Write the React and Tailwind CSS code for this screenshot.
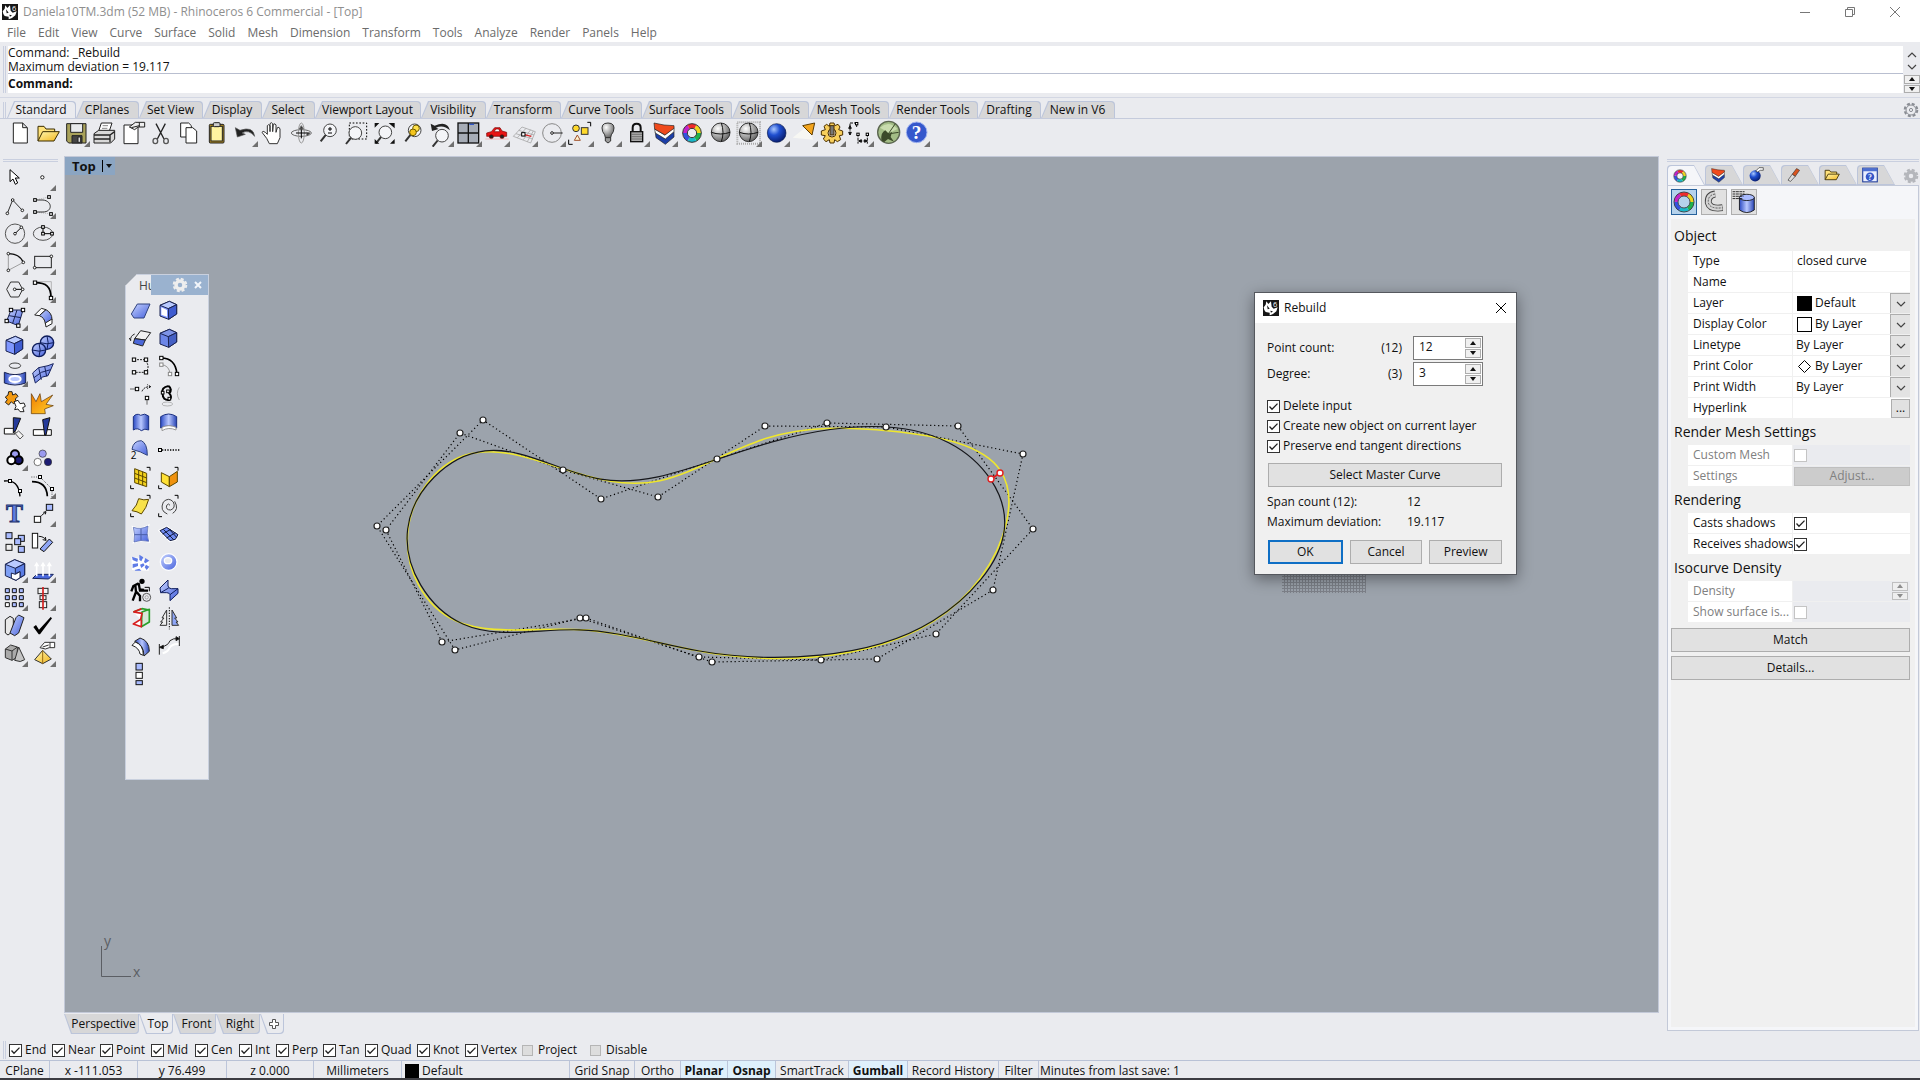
import React, { useState } from "react";

// ---------- small drawing helpers (84 unit grid, 3 units per pixel) ----------

const Sq = ({ x, y, s = 10, fill = "#fff", stroke = "#000" }) => (
  <rect x={x - s / 2} y={y - s / 2} width={s} height={s} fill={fill} stroke={stroke} strokeWidth="3" />
);

const Dot = ({ x, y, r = 4 }) => <circle cx={x} cy={y} r={r} fill="#fff" stroke="#000" strokeWidth="2.5" />;

const Cube = ({ top = "#b9caff", left = "#7f97ff", right = "#3f5cd0" }) => (
  <g stroke="#1a2350" strokeWidth="3" strokeLinejoin="round">
    <path d="M18 28L46 16L68 26L68 54L44 70L18 60Z" fill={left} />
    <path d="M18 28L46 16L68 26L43 38Z" fill={top} />
    <path d="M43 38L68 26V54L44 70Z" fill={right} />
  </g>
);

const Brackets = () => <path d="M62 10H72V20M14 64V74H24" fill="none" stroke="#000" strokeWidth="3" />;

const RING_COLORS = ["#1fb14b", "#18b8c9", "#3352e0", "#c321c9", "#ef2b2b", "#efd51c"];

const Ring = ({ r = 24 }) => (
  <g fill="none" strokeWidth="13">
    {RING_COLORS.map((color, i) => (
      <circle key={color} cx="42" cy="42" r={r} pathLength="60" strokeDasharray="10 50" strokeDashoffset={i * -10} stroke={color} />
    ))}
    <circle cx="42" cy="42" r={r + 7} stroke="#333" strokeWidth="3" />
    <circle cx="42" cy="42" r={r - 7} stroke="#333" strokeWidth="3" />
  </g>
);

const Sphere = ({ fill = "url(#gGray)" }) => (
  <g stroke="#333" strokeWidth="3" fill="none">
    <circle cx="44" cy="40" r="28" fill={fill} />
    <path d="M16 40Q44 50 72 40M46 12Q56 40 46 68" stroke="#111" />
  </g>
);

const Magnifier = ({ x = 46, y = 34, children }) => (
  <g fill="none" stroke="#333" strokeWidth="3">
    <path d={`M${x - 12} ${y + 13}L${x - 28} ${y + 33}`} strokeWidth="6" />
    <circle cx={x} cy={y} r="19" fill="#f4f5f8" stroke="#444" />
    {children}
  </g>
);

const Layers = () => (
  <g stroke="#222" strokeWidth="2" strokeLinejoin="round">
    <path d="M16 40L44 58L72 38V54L46 76L18 56Z" fill="#1d3fa8" />
    <path d="M14 30L44 48L72 26V38L46 60L16 42Z" fill="#fff" />
    <path d="M12 12L42 18L72 20L72 28L45 48L14 30Z" fill="#f04a1c" />
  </g>
);

const Gradients = () => (
  <svg className="absolute h-0 w-0" aria-hidden="true">
    <defs>
      <linearGradient id="gBlue" x1="0" y1="0" x2="1" y2="1">
        <stop offset="0" stopColor="#c6d3ff" />
        <stop offset="1" stopColor="#4661dc" />
      </linearGradient>
      <linearGradient id="gDeep" x1="0" y1="0" x2="1" y2="0">
        <stop offset="0" stopColor="#2c4bc4" />
        <stop offset=".5" stopColor="#b9c8ff" />
        <stop offset="1" stopColor="#2743b4" />
      </linearGradient>
      <linearGradient id="gYellow" x1="0" y1="0" x2="1" y2="1">
        <stop offset="0" stopColor="#fff7b0" />
        <stop offset="1" stopColor="#f3b61c" />
      </linearGradient>
      <linearGradient id="gOrange" x1="0" y1="0" x2="1" y2="1">
        <stop offset="0" stopColor="#f07d00" />
        <stop offset="1" stopColor="#ffd02b" />
      </linearGradient>
      <radialGradient id="gGray" cx=".35" cy=".3" r=".8">
        <stop offset="0" stopColor="#fff" />
        <stop offset="1" stopColor="#555" />
      </radialGradient>
      <radialGradient id="gBall" cx=".35" cy=".3" r=".8">
        <stop offset="0" stopColor="#a9c8ff" />
        <stop offset=".4" stopColor="#1f4fd0" />
        <stop offset="1" stopColor="#04145e" />
      </radialGradient>
      <pattern id="gMesh" width="3" height="3" patternUnits="userSpaceOnUse">
        <path d="M0 .5H3M.5 0V3" stroke="#7d8189" strokeWidth="1" />
      </pattern>
    </defs>
  </svg>
);

// ---------- icon tables: [name, drawing, has flyout] ----------

const STANDARD_TOOLS = [
  ["New", <path d="M22 12H50L64 26V72H22Z M50 12V26H64" fill="#fff" stroke="#222" strokeWidth="3" />],
  ["Open", (
    <g stroke="#3a2c00" strokeWidth="3" strokeLinejoin="round">
      <path d="M12 66V22H30L36 30H62V40" fill="#ffe27a" />
      <path d="M12 66L26 38H76L60 66Z" fill="url(#gYellow)" />
    </g>
  )],
  ["Save", (
    <g stroke="#222" strokeWidth="3">
      <path d="M14 14H72V72H20L14 66Z" fill="#a9a25a" />
      <path d="M26 14H62V40H26Z" fill="#e8eaec" />
      <path d="M30 50H60V72H30Z" fill="#444" />
      <path d="M48 54H56V70H48Z" fill="#ddd" />
    </g>
  ), true],
  ["Print", (
    <g stroke="#222" strokeWidth="3" strokeLinejoin="round">
      <path d="M26 36L34 12H66L58 36Z" fill="#fff" />
      <path d="M12 44L26 34H74V60L62 72H12Z" fill="#d8d8d8" />
      <path d="M12 48H60L74 38M12 60H60M60 48V70" fill="none" strokeWidth="4" />
      <path d="M38 20H54M36 28H52" fill="none" stroke="#888" />
    </g>
  )],
  ["Document properties", (
    <g stroke="#222" strokeWidth="3">
      <path d="M18 18H60V74H18Z" fill="#fff" />
      <path d="M34 24L52 10H80V24H60L50 32Z" fill="#eee" />
      <path d="M40 26L64 20M64 10V24" fill="none" />
    </g>
  )],
  ["Cut", (
    <g fill="none" stroke="#222" strokeWidth="4">
      <path d="M30 14L54 60M58 14L34 60" />
      <ellipse cx="28" cy="66" rx="7" ry="8" stroke="#555" />
      <ellipse cx="60" cy="66" rx="7" ry="8" stroke="#555" />
    </g>
  )],
  ["Copy", (
    <g fill="#fff" stroke="#222" strokeWidth="3">
      <path d="M20 12H44L52 20V54H20Z" />
      <path d="M36 26H56L68 36V72H36Z" />
    </g>
  )],
  ["Paste", (
    <g stroke="#222" strokeWidth="3">
      <rect x="22" y="16" width="44" height="56" rx="3" fill="#b08a1e" />
      <rect x="27" y="22" width="34" height="44" fill="#fff3a0" />
      <rect x="34" y="11" width="20" height="12" rx="3" fill="#ccc" />
    </g>
  )],
  ["Undo", <path d="M16 26L22 54L46 46L36 42Q56 30 74 52Q70 20 30 34Z" fill="#222" stroke="#555" strokeWidth="2" />, true],
  ["Pan", (
    <path
      d="M26 58L12 40Q14 34 22 40L28 46V20Q32 14 36 20V38V14Q40 8 44 14V38L46 16Q52 12 54 18V40L58 26Q64 22 66 30V56L58 74H34Z"
      fill="#fff" stroke="#333" strokeWidth="3" strokeLinejoin="round"
    />
  )],
  ["Rotate view", (
    <g fill="none" stroke="#666" strokeWidth="3">
      <ellipse cx="46" cy="42" rx="30" ry="10" />
      <ellipse cx="46" cy="42" rx="9" ry="30" stroke="#999" />
      <path d="M46 26V58M30 42H62" stroke="#000" />
      <path d="M46 20L52 30H40ZM64 50L72 42L60 40Z" fill="#333" />
    </g>
  )],
  ["Zoom", <Magnifier x={48}><path d="M48 24V36M42 30H54M42 42H54" stroke="#000" /></Magnifier>],
  ["Zoom window", (
    <g>
      <path d="M22 12H74V60H22Z" fill="none" stroke="#000" strokeWidth="3" strokeDasharray="5 5" />
      <Magnifier x={40} y={42} />
    </g>
  )],
  ["Zoom extents", (
    <g>
      <Magnifier x={46} y={40} />
      <path d="M14 12H28L14 26ZM56 12H74V28ZM14 60V74H28ZM74 60V74H60Z" fill="#111" />
    </g>
  )],
  ["Zoom selected", (
    <Magnifier x={50} y={34}>
      <circle cx="54" cy="28" r="10" fill="#ffe14a" stroke="#6d5a00" />
      <circle cx="45" cy="40" r="10" fill="#f5c51c" stroke="#6d5a00" />
    </Magnifier>
  )],
  ["Undo view change", (
    <g>
      <Magnifier x={48} y={50} />
      <path d="M14 14L18 36L38 30L30 26Q52 16 72 34Q64 4 26 20Z" fill="#222" />
    </g>
  ), true],
  ["Four viewports", (
    <g stroke="#111" strokeWidth="4">
      <rect x="12" y="12" width="62" height="60" fill="#a6acb6" />
      <path d="M43 12V72M12 42H74" />
      <path d="M46 16H60" stroke="#3157c8" />
    </g>
  ), true],
  ["Named views", (
    <g stroke="#7a0000" strokeWidth="2">
      <path d="M14 50V42L28 38L38 26H54L60 36L74 40V52H14Z" fill="#e81414" />
      <path d="M42 30H50L54 38H36Z" fill="#fff" />
      <circle cx="28" cy="53" r="6" fill="#222" />
      <circle cx="60" cy="53" r="6" fill="#222" />
      <path d="M10 60H80" stroke="#f2a3a3" />
    </g>
  ), true],
  ["Set CPlane", (
    <g fill="none" stroke="#999" strokeWidth="2">
      <path d="M10 52L36 24L76 38L62 72ZM18 44L68 60M26 34L72 48M22 56L48 28M40 62L62 32M52 68L70 36" />
      <path d="M40 46L64 52" stroke="#d22" strokeWidth="4" />
      <Sq x={40} y={46} />
    </g>
  ), true],
  ["Object snap", (
    <g fill="none" stroke="#888" strokeWidth="3">
      <circle cx="42" cy="42" r="28" />
      <path d="M42 42H74" stroke="#222" />
      <Dot x={42} y={42} />
    </g>
  ), true],
  ["Select objects", (
    <g stroke="#333" strokeWidth="3">
      <circle cx="30" cy="28" r="10" fill="#ffd92b" />
      <rect x="46" y="26" width="20" height="20" fill="#ffd92b" />
      <path d="M34 48L43 64H25Z" fill="#fff3d0" stroke="#a0522d" />
      <path d="M64 10H74V22M8 62V76H20" fill="none" stroke="#000" />
    </g>
  ), true],
  ["Hide", (
    <g stroke="#333" strokeWidth="3">
      <path d="M34 56Q34 48 26 38Q18 12 42 12Q66 12 58 38Q50 48 50 56Z" fill="url(#gGray)" />
      <path d="M34 56H50V66L42 72L34 66Z" fill="#999" />
    </g>
  ), true],
  ["Lock", (
    <g stroke="#111" strokeWidth="4">
      <path d="M32 40V26Q32 14 44 14Q56 14 56 26V40" fill="none" strokeWidth="6" />
      <rect x="26" y="38" width="36" height="30" fill="#aaa" />
      <path d="M28 46H60M28 53H60M28 60H60" stroke="#555" strokeWidth="2" />
    </g>
  ), true],
  ["Layers", <Layers />, true],
  ["Object properties", <Ring r={21} />, true],
  ["Shade", <Sphere />],
  ["Render preview", (
    <g>
      <path d="M10 10H78V74H10Z" fill="none" stroke="#aaa" strokeWidth="6" strokeDasharray="3 3" />
      <Sphere />
    </g>
  ), true],
  ["Render", <circle cx="44" cy="42" r="28" fill="url(#gBall)" stroke="#0a1c50" strokeWidth="2" />, true],
  ["Spotlight", (
    <g>
      <path d="M8 56L52 20L70 62Z" fill="#f7f7f3" />
      <path d="M38 20L74 12L66 48Z" fill="#f3a41c" stroke="#5c3c00" strokeWidth="3" />
    </g>
  ), true],
  ["Options", (
    <g stroke="#4a2f00" strokeWidth="3">
      <path d="M36 12H48L50 20L60 16L66 24L62 32L74 36V48L64 50L68 62L58 68L50 62L48 72H36L34 62L24 68L16 60L22 50L10 48V36L22 32L18 22L26 16L34 22Z" fill="#f8cf5c" />
      <circle cx="42" cy="42" r="12" fill="#eaebef" />
      <path d="M36 20H48V48H36Z" fill="#777" />
    </g>
  ), true],
  ["Dimension", (
    <g fill="none" stroke="#111" strokeWidth="3">
      <path d="M12 14V50M12 12H32V24M36 44V74M64 44V74M40 66H62" strokeDasharray="9 3" />
      <path d="M12 20L8 28H16ZM12 48L8 40H16ZM38 66L46 62V70ZM64 66L56 62V70Z" fill="#111" />
      <Sq x={32} y={14} s={7} />
      <Sq x={36} y={46} s={7} />
      <Sq x={64} y={46} s={7} />
    </g>
  ), true],
  ["Grasshopper", (
    <g>
      <circle cx="44" cy="40" r="33" fill="#a3bd86" stroke="#5b6650" strokeWidth="4" />
      <path d="M18 26Q44 2 70 30L46 42Z" fill="#c9dcae" />
      <path d="M22 64Q20 40 34 34L44 44L54 38L50 54L60 68L42 60L30 70Z" fill="#3c4a2a" />
      <path d="M42 46L64 14M48 44L74 40" stroke="#3c4a2a" strokeWidth="3" />
    </g>
  )],
  ["Help", (
    <g>
      <circle cx="44" cy="40" r="31" fill="#3558cc" stroke="#9fb2ef" strokeWidth="3" />
      <text x="44" y="60" textAnchor="middle" fontFamily="Liberation Serif, serif" fontWeight="bold" fontSize="58" fill="#fff">?</text>
    </g>
  ), true],
];

const SIDE_TOOLS = [
  ["Select", <path d="M30 20V56L39 48L46 64L53 60L46 45H58Z" fill="#fff" stroke="#000" strokeWidth="3" />],
  ["Point", <Dot x={43} y={43} r={5} />, true],
  ["Polyline", (
    <g>
      <path d="M22 67L38 27L67 58" fill="none" stroke="#333" strokeWidth="3" />
      <Dot x={22} y={67} /><Dot x={38} y={27} /><Dot x={67} y={58} />
    </g>
  ), true],
  ["Curve", (
    <g>
      <path d="M21 27L63 18M21 63L69 69" fill="none" stroke="#999" strokeWidth="2" strokeDasharray="3 3" />
      <path d="M21 27H45C74 30 74 63 45 63H21" fill="none" stroke="#333" strokeWidth="3" />
      <Sq x={21} y={27} s={8} /><Sq x={63} y={18} s={8} /><Sq x={21} y={63} s={8} /><Sq x={69} y={69} s={8} />
    </g>
  ), true],
  ["Circle", (
    <g>
      <circle cx="45" cy="44" r="29" fill="none" stroke="#555" strokeWidth="3" />
      <path d="M45 44L64 25" stroke="#000" strokeWidth="3" />
      <Dot x={45} y={44} /><Dot x={64} y={25} />
    </g>
  ), true],
  ["Ellipse", (
    <g>
      <ellipse cx="45" cy="44" rx="29" ry="20" fill="none" stroke="#555" strokeWidth="3" />
      <path d="M45 24V44H72" fill="none" stroke="#000" strokeWidth="3" />
      <Sq x={45} y={24} s={8} /><Sq x={45} y={44} s={8} /><Sq x={72} y={44} s={8} />
    </g>
  ), true],
  ["Arc", (
    <g>
      <path d="M70 46L25 70V20" fill="none" stroke="#777" strokeWidth="2" />
      <path d="M25 20Q58 20 70 46" fill="none" stroke="#111" strokeWidth="4" />
      <Dot x={25} y={20} /><Dot x={70} y={46} /><Dot x={25} y={70} />
    </g>
  ), true],
  ["Rectangle", (
    <g>
      <rect x="20" y="28" width="50" height="34" fill="none" stroke="#222" strokeWidth="3" />
      <Dot x={20} y={62} /><Dot x={70} y={28} />
    </g>
  ), true],
  ["Polygon", (
    <g>
      <path d="M20 43L32 21H56L68 43L56 66H32Z" fill="none" stroke="#333" strokeWidth="3" />
      <path d="M44 43H68" stroke="#000" strokeWidth="3" />
      <Dot x={44} y={43} /><Dot x={68} y={43} />
    </g>
  ), true],
  ["Fillet", (
    <g>
      <path d="M21 20H70V69" fill="none" stroke="#999" strokeWidth="2" />
      <path d="M21 23C55 23 69 35 69 69" fill="none" stroke="#000" strokeWidth="5" />
      <Sq x={21} y={23} /><Sq x={69} y={69} />
    </g>
  ), true],
  ["Surface from points", (
    <g>
      <path d="M33 21H69L55 68L20 54Z" fill="url(#gBlue)" stroke="#1a2350" strokeWidth="3" />
      <path d="M27 38L63 44M51 21L38 61" stroke="#1a2350" strokeWidth="3" />
      <Sq x={33} y={21} /><Sq x={69} y={21} /><Sq x={55} y={68} /><Sq x={20} y={54} />
    </g>
  ), true],
  ["Extrude curve", (
    <g stroke="#222" strokeWidth="3" strokeLinejoin="round">
      <path d="M20 36L40 16L54 20L34 38Z" fill="#fff" />
      <path d="M34 38L54 20Q72 30 72 50L52 62Q50 44 34 38Z" fill="url(#gBlue)" />
      <path d="M52 60L72 48V62L54 72Z" fill="#fff" />
    </g>
  ), true],
  ["Box", <Cube />, true],
  ["Boolean", (
    <g stroke="#0e1d5c" strokeWidth="4">
      <circle cx="57" cy="35" r="20" fill="url(#gBlue)" />
      <circle cx="33" cy="57" r="20" fill="url(#gBlue)" />
      <path d="M13 57Q33 64 53 57M33 37Q40 57 33 77M37 35Q57 42 77 35M57 15Q64 35 57 55" strokeWidth="3" fill="none" />
    </g>
  ), true],
  ["Project", (
    <g stroke="#1a2350" strokeWidth="3">
      <ellipse cx="45" cy="20" rx="17" ry="8" fill="none" stroke="#444" />
      <path d="M13 40Q45 54 77 40V72Q45 84 13 72Z" fill="url(#gDeep)" />
      <ellipse cx="45" cy="60" rx="17" ry="9" fill="#b9c8ff" stroke="#fff" strokeWidth="6" />
    </g>
  ), true],
  ["Mesh", (
    <g fill="none" stroke="#17235f" strokeWidth="3">
      <path d="M14 42L32 26L60 20L76 14L60 50L44 54L22 72Z" fill="url(#gBlue)" />
      <path d="M18 56L40 40L68 32M32 26L40 62M50 22L56 52" />
    </g>
  ), true],
  ["Plugin", (
    <g stroke="#222" strokeWidth="3">
      <path d="M16 30L24 24L26 14H36L38 24L48 20L54 28L46 36L50 46L40 50L34 44L26 54L16 46L22 38Z" fill="#f39a12" />
      <path d="M42 44L54 40L60 50L72 48L76 58L68 62L72 74L60 74L54 66L44 68L48 58Z" fill="#fff" />
    </g>
  )],
  ["Explode", <path d="M10 20L24 44L36 20L40 44L74 24L54 52L76 56L50 66L52 80H10Z" fill="url(#gOrange)" stroke="#5a3000" strokeWidth="2" />],
  ["Trim", (
    <g stroke="#111" strokeWidth="3">
      <path d="M13 40H45V57H13Z" fill="#fff" />
      <path d="M46 56L56 48L70 62L60 72Z" fill="#f4f4f4" stroke="#555" />
      <path d="M40 8L62 10L48 44L40 54Z" fill="#243a9a" />
    </g>
  )],
  ["Split", (
    <g stroke="#111" strokeWidth="3">
      <path d="M16 44H70V61H16Z" fill="#fff" />
      <path d="M44 14L66 8L54 60H50Z" fill="#243a9a" />
    </g>
  )],
  ["Group", (
    <g stroke="#000" strokeWidth="6">
      <circle cx="45" cy="34" r="12" fill="#9b9bf0" />
      <circle cx="56" cy="52" r="12" fill="#1b1b72" />
      <circle cx="34" cy="52" r="12" fill="#fff" />
    </g>
  ), true],
  ["Ungroup", (
    <g stroke="#333" strokeWidth="2">
      <circle cx="44" cy="32" r="11" fill="#9b9bf0" />
      <circle cx="29" cy="57" r="11" fill="#fff" />
      <circle cx="60" cy="57" r="11" fill="#1b1b72" />
    </g>
  )],
  ["Edit points", (
    <g>
      <path d="M12 30Q56 24 60 76" fill="none" stroke="#000" strokeWidth="4" />
      <Sq x={30} y={30} s={9} /><Sq x={60} y={60} s={9} />
    </g>
  )],
  ["Control points", (
    <g>
      <path d="M10 18H36L72 54V80" fill="none" stroke="#000" strokeWidth="2" strokeDasharray="3 4" />
      <path d="M12 32Q56 32 58 76" fill="none" stroke="#000" strokeWidth="5" />
      <Sq x={36} y={18} s={9} /><Sq x={72} y={54} s={9} />
    </g>
  ), true],
  ["Text", (
    <text x="43" y="70" textAnchor="middle" fontFamily="Liberation Serif, serif" fontWeight="bold" fontSize="76" fill="#5f7de0" stroke="#22326e" strokeWidth="3">T</text>
  )],
  ["Move", (
    <g stroke="#111" strokeWidth="3">
      <rect x="19" y="52" width="19" height="18" fill="#fff" />
      <rect x="55" y="16" width="19" height="18" fill="#a9bbff" />
      <path d="M40 50L54 38M54 38L46 40M54 38L52 46" fill="none" />
    </g>
  ), true],
  ["Array", (
    <g stroke="#111" strokeWidth="3" fill="#a9bbff">
      <rect x="18" y="17" width="18" height="18" />
      <rect x="55" y="25" width="18" height="18" />
      <rect x="44" y="35" width="18" height="18" />
      <rect x="18" y="52" width="18" height="18" fill="#eee" />
      <rect x="55" y="58" width="18" height="18" />
    </g>
  )],
  ["Rotate", (
    <g stroke="#111" strokeWidth="3">
      <rect x="13" y="19" width="16" height="44" fill="#fff" />
      <path d="M36 66L64 36L74 46L48 74Z" fill="#8fa6f5" />
      <path d="M32 28Q48 28 54 40M54 40L52 30M54 40L44 38" fill="none" />
    </g>
  )],
  ["Solid edit", (
    <g stroke="#1a2350" strokeWidth="3" strokeLinejoin="round">
      <path d="M16 28L44 14L74 26V60L48 76L16 62Z" fill="#7fa0f5" />
      <path d="M16 28L44 14L74 26L46 40Z" fill="#b9caff" />
      <path d="M46 40L74 26V60L60 68V50L46 56Z" fill="#5c7ee4" />
      <path d="M34 54L46 58L60 50V68L48 76L34 70Z" fill="#fff" />
    </g>
  ), true],
  ["Extract", (
    <g>
      <path d="M14 70L26 58H76L62 72Z" fill="#4a68dc" stroke="#16245e" strokeWidth="3" />
      <path d="M26 64V28M45 64V28M64 64V28" stroke="#fff" strokeWidth="5" />
      <path d="M26 20L34 34H18ZM45 20L53 34H37ZM64 20L72 34H56Z" fill="#fff" />
    </g>
  ), true],
  ["Grid array", (
    <g stroke="#111" strokeWidth="3" fill="#a9bbff">
      <path d="M16 17H28V29H16ZM37 17H49V29H37ZM58 17H70V29H58ZM16 38H28V50H16ZM37 38H49V50H37ZM58 38H70V50H58ZM37 59H49V71H37ZM58 59H70V71H58Z" />
      <path d="M16 59H28V71H16Z" fill="#fff" />
    </g>
  ), true],
  ["Align", (
    <g stroke="#222" strokeWidth="3" fill="#f4f4f4">
      <rect x="30" y="16" width="30" height="16" />
      <rect x="36" y="38" width="18" height="12" />
      <rect x="34" y="56" width="22" height="18" />
      <path d="M45 12V80" stroke="#d42020" strokeWidth="5" />
    </g>
  ), true],
  ["Transform", (
    <g stroke="#222" strokeWidth="3" strokeLinejoin="round">
      <path d="M16 26L30 16L40 22V60L24 72L16 66Z" fill="#e8e8e8" />
      <path d="M48 20L56 12L72 20L56 66L44 74L30 66Z" fill="url(#gBlue)" />
    </g>
  ), true],
  ["Check", <path d="M16 48L24 42L33 56L68 18L72 22L36 70H32Z" fill="#000" />, true],
  ["Render objects", (
    <g stroke="#333" strokeWidth="3" strokeLinejoin="round">
      <path d="M16 30L32 18L52 24V54L36 64L16 56Z" fill="#aaa" />
      <path d="M16 30L36 36L52 24M36 36V64" fill="none" />
      <path d="M56 24L74 62Q62 72 44 64Z" fill="#c4c4c4" />
    </g>
  ), true],
  ["Materials", (
    <g stroke="#333" strokeWidth="3" strokeLinejoin="round">
      <path d="M36 26L50 10H80V26H64L52 30Z" fill="#fff" />
      <path d="M66 10V26M44 24L62 18" fill="none" />
      <path d="M44 34L70 60L44 74L20 62Z" fill="url(#gYellow)" />
      <path d="M44 34V74" stroke="#9a6a10" />
    </g>
  ), true],
];

const PALETTE_TOOLS = [
  ["Plane", <path d="M16 54L34 24H72L54 66H24Z" fill="url(#gBlue)" stroke="#30437f" strokeWidth="3" />],
  ["Cube face", (
    <g>
      <Cube />
      <path d="M22 34L39 42V62L22 56Z" fill="#fff" />
    </g>
  )],
  ["Flip", (
    <g stroke="#222" strokeWidth="3">
      <path d="M26 44L44 20L74 26L58 48Z" fill="#f1f1f1" />
      <path d="M26 44L58 48L50 66L22 58Z" fill="#4b67d8" />
      <path d="M26 30Q12 36 14 50L10 42" fill="none" />
    </g>
  )],
  ["Fillet edge", <Cube top="#7d93e6" left="#6c86e8" right="#4560c4" />],
  ["Close curve", (
    <g>
      <path d="M24 23H56Q74 42 60 61H24" fill="none" stroke="#222" strokeWidth="3" strokeDasharray="6 3" />
      <Sq x={24} y={23} /><Sq x={60} y={23} /><Sq x={24} y={61} /><Sq x={60} y={61} />
    </g>
  )],
  ["Offset", (
    <g>
      <path d="M22 38Q46 40 48 66" fill="none" stroke="#999" strokeWidth="3" />
      <path d="M22 18Q64 18 69 66" fill="none" stroke="#000" strokeWidth="5" />
      <Sq x={22} y={18} /><Sq x={69} y={66} />
      <Sq x={22} y={38} stroke="#888" /><Sq x={48} y={66} stroke="#888" />
    </g>
  )],
  ["Extend", (
    <g>
      <path d="M12 27H30M63 54V74" stroke="#666" strokeWidth="3" />
      <path d="M48 34Q54 20 72 20M74 20L64 14M74 20L64 26" fill="none" stroke="#000" strokeWidth="3" strokeDasharray="6 3" />
      <Sq x={33} y={27} /><Sq x={63} y={54} />
    </g>
  )],
  ["Curve through", (
    <g fill="none" stroke="#000" strokeWidth="6">
      <path d="M44 18Q20 22 26 42Q26 62 46 60Q56 52 46 40Q56 28 44 18" />
      <path d="M76 22Q64 40 76 60" stroke="#999" strokeWidth="2" />
      <ellipse cx="40" cy="72" rx="16" ry="6" stroke="#999" strokeWidth="2" />
      <Sq x={26} y={38} s={8} /><Sq x={42} y={34} s={8} /><Sq x={46} y={56} s={8} />
    </g>
  )],
  ["Cylinder", <path d="M22 26Q32 14 44 22Q56 14 68 24V66Q56 60 46 68Q34 58 22 66Z" fill="url(#gDeep)" stroke="#1a2f80" strokeWidth="3" />],
  ["Open cylinder", (
    <g stroke="#1a2f80" strokeWidth="3">
      <path d="M20 26Q44 10 68 26V60Q44 48 20 60Z" fill="url(#gDeep)" />
      <path d="M24 58Q44 48 66 58V66Q44 56 24 68Z" fill="#fff" stroke="#999" />
    </g>
  )],
  ["Two rail", (
    <g>
      <path d="M18 40Q22 14 46 14Q64 22 64 58Q44 46 18 40Z" fill="url(#gBlue)" stroke="#30437f" strokeWidth="3" />
      <text x="14" y="70" fontFamily="Open Sans, sans-serif" fontSize="30" fill="#000">2</text>
    </g>
  )],
  ["Divide", (
    <g>
      <path d="M24 42H76" stroke="#000" strokeWidth="5" strokeDasharray="4 4" />
      <Sq x={18} y={42} s={9} />
    </g>
  )],
  ["Select surfaces", (
    <g>
      <path d="M26 14L62 28V68L26 56Z" fill="#f3d21c" stroke="#5c4800" strokeWidth="3" />
      <path d="M38 18V60M50 23V64M26 28L62 42M26 42L62 56" stroke="#5c4800" strokeWidth="3" />
      <Brackets />
    </g>
  )],
  ["Select polysurfaces", (
    <g stroke="#5c4800" strokeWidth="3">
      <path d="M22 26L46 38V68L22 54Z" fill="#ffe135" />
      <path d="M46 38L70 22V54L46 68Z" fill="#f0920e" />
      <Brackets />
    </g>
  )],
  ["Select planes", (
    <g>
      <path d="M18 56Q34 40 38 20Q54 26 68 22Q62 48 46 66Q34 58 18 56Z" fill="#f8e24a" stroke="#5c4800" strokeWidth="3" />
      <Brackets />
    </g>
  )],
  ["Select curves", (
    <g>
      <path d="M48 40Q44 32 38 40Q34 54 50 54Q66 48 58 30Q44 14 28 30Q16 56 40 66M62 28Q76 52 56 64" fill="none" stroke="#444" strokeWidth="3" />
      <Brackets />
    </g>
  )],
  ["Patch", (
    <g stroke="#4a5ea8" strokeWidth="2">
      <path d="M22 22Q44 30 66 18Q60 42 68 64Q44 58 24 66Q28 42 22 22Z" fill="#9fb2f5" stroke="#fff" strokeWidth="7" />
      <path d="M22 22Q44 30 66 18Q60 42 68 64Q44 58 24 66Q28 42 22 22Z" fill="url(#gBlue)" />
      <path d="M25 44H64M45 26V60" fill="none" strokeWidth="3" />
    </g>
  )],
  ["Drape", (
    <g fill="none" stroke="#141c40" strokeWidth="3">
      <path d="M18 32L38 22L72 44L64 58L48 62Z" fill="#6f8af0" stroke="#fff" strokeWidth="8" />
      <path d="M18 32L38 22L72 44L64 58L48 62Z" fill="#6f8af0" />
      <path d="M28 28L60 60M44 26L68 52M26 42L50 28M38 54L64 38" />
    </g>
  )],
  ["Network", (
    <g>
      <path d="M16 28Q40 26 70 40L68 68L18 66Z" fill="#fff" />
      <path d="M18 26L36 32L34 42L20 36ZM40 20L52 28L46 40L40 36ZM58 30L70 38L58 46L54 42ZM20 48L36 46V54L20 60ZM42 50L52 46L56 52L46 60ZM26 66L40 62L46 68H28ZM60 50L70 56L62 66L56 58Z" fill="#5f7be6" />
    </g>
  )],
  ["Torus", (
    <g>
      <circle cx="44" cy="42" r="25" fill="url(#gBlue)" stroke="#fff" strokeWidth="4" />
      <ellipse cx="42" cy="38" rx="11" ry="9" fill="#eaebef" stroke="#fff" strokeWidth="4" />
    </g>
  )],
  ["Construction", (
    <g stroke="#000" strokeWidth="4" fill="none">
      <circle cx="48" cy="16" r="6" fill="#000" />
      <path d="M38 22L22 30L16 46M38 22L42 44H66M28 28L30 48L20 74M32 48L42 60V76M40 40L54 42" strokeWidth="7" />
      <circle cx="62" cy="64" r="12" stroke="#555" strokeWidth="3" />
      <circle cx="62" cy="64" r="5" stroke="#888" strokeWidth="2" />
      <path d="M56 34H70V46" strokeWidth="3" />
    </g>
  )],
  ["Bend", (
    <g stroke="#0e1d5c" strokeWidth="3" strokeLinejoin="round">
      <path d="M18 36L42 12V30Q44 38 52 38H72V52L48 74V56Q46 50 38 50H20Z" fill="url(#gBlue)" />
      <path d="M20 50L44 36M48 56L72 38" />
    </g>
  )],
  ["Section", (
    <g fill="#fff" strokeWidth="5" strokeLinejoin="round">
      <path d="M48 24L70 16V54L46 68Z" stroke="#2aa02a" fill="#d8e8d8" />
      <path d="M22 24L48 14L70 18" stroke="#2aa02a" fill="none" />
      <path d="M22 24L48 28L44 46L22 60L46 68V48M22 24L46 14" stroke="#d81e1e" />
    </g>
  )],
  ["Mirror", (
    <g stroke="#333" strokeWidth="3">
      <path d="M38 18V64H18L26 54H20L30 42H24Z" fill="#eee" />
      <path d="M54 18V64H74L66 54H72L62 42H68Z" fill="#8ea6f7" />
      <path d="M46 10V76" stroke="#000" strokeDasharray="4 4" />
    </g>
  )],
  ["Thicken", (
    <g stroke="#222" strokeWidth="3">
      <path d="M18 40L28 30Q52 38 52 70L42 66Q40 48 18 40Z" fill="#fff" />
      <path d="M26 28L42 18Q70 26 70 58L54 72Q54 38 26 28Z" fill="url(#gDeep)" />
    </g>
  )],
  ["Curve length", (
    <g fill="none" stroke="#222" strokeWidth="3">
      <path d="M26 64Q44 58 46 48Q54 34 76 36" stroke="#fff" strokeWidth="6" />
      <path d="M16 36V68M76 12V42M20 46Q44 40 48 26Q58 18 72 20" />
      <path d="M16 46L28 40V50ZM76 20L66 14V26Z" fill="#000" />
    </g>
  )],
  ["Stack", (
    <g stroke="#111" strokeWidth="3">
      <rect x="30" y="10" width="19" height="20" fill="#a9bbff" />
      <rect x="30" y="37" width="19" height="18" fill="#fff" />
      <rect x="30" y="62" width="19" height="12" fill="#a9bbff" />
    </g>
  )],
];

const ToolButton = ({ tool }) => (
  <button title={tool[0]} aria-label={tool[0]} className="h-7 w-7 shrink-0">
    <svg viewBox="0 0 84 84" className="h-7 w-7">
      {tool[1]}
      {tool[2] && <path d="M84 66V84H66Z" fill="#707070" />}
    </svg>
  </button>
);

const RhinoLogo = () => (
  <svg viewBox="0 0 48 48" className="h-4 w-4 shrink-0">
    <rect width="48" height="48" fill="#161616" />
    <path d="M2 22L8 14L10 4L16 12L24 4L26 20L32 26L44 22L40 34L30 42L20 46L20 38L8 36L4 30Z" fill="#fff" />
    <path d="M12 16L20 26L14 28ZM22 32L30 34L24 38Z" fill="#161616" />
    <text x="30" y="20" fontFamily="Open Sans, sans-serif" fontSize="22" fill="#fff">6</text>
  </svg>
);

const Gear = ({ color = "#8a8d94" }) => (
  <svg viewBox="0 0 16 16" className="h-4 w-4" fill="none" stroke={color}>
    <circle cx="8" cy="8" r="6.3" strokeWidth="2" strokeDasharray="3 1.95" />
    <circle cx="8" cy="8" r="5" />
    <circle cx="8" cy="8" r="1.6" />
  </svg>
);

const SolidGear = ({ color = "#b4b6bb" }) => (
  <svg viewBox="0 0 16 16" className="h-4 w-4" fill="none" stroke={color}>
    <circle cx="8" cy="8" r="6.3" strokeWidth="2" strokeDasharray="3 1.95" />
    <circle cx="8" cy="8" r="4" strokeWidth="3.5" />
  </svg>
);

const Chevron = ({ up }) => (
  <svg viewBox="0 0 10 6" className="h-[6px] w-[10px]" fill="none" stroke="#444" strokeWidth="1.2">
    <path d={up ? "M1 5L5 1L9 5" : "M1 1L5 5L9 1"} />
  </svg>
);

const Arrow = ({ up }) => (
  <svg viewBox="0 0 6 4" className="h-1 w-[6px]">
    <path d={up ? "M0 4L3 0L6 4Z" : "M0 0L3 4L6 0Z"} fill="currentColor" />
  </svg>
);

const Spinner = ({ label, className }) => (
  <span className={`flex w-4 shrink-0 flex-col gap-px ${className || ""}`}>
    <button aria-label={`Increase ${label}`} className="flex flex-1 items-center justify-center border border-[#adadad] bg-[#f0f0f0]"><Arrow up /></button>
    <button aria-label={`Decrease ${label}`} className="flex flex-1 items-center justify-center border border-[#adadad] bg-[#f0f0f0]"><Arrow /></button>
  </span>
);

const Checkbox = ({ defaultChecked, disabled, ...rest }) => {
  const [checked, setChecked] = useState(!!defaultChecked);
  return (
    <span className="grid h-[13px] w-[13px] shrink-0">
      <input
        type="checkbox"
        checked={checked}
        disabled={disabled}
        onChange={(e) => setChecked(e.target.checked)}
        className="col-start-1 row-start-1 h-[13px] w-[13px] appearance-none border border-[#333] bg-white disabled:border-[#c4c4c4]"
        {...rest}
      />
      {checked && (
        <svg viewBox="0 0 13 13" className="pointer-events-none col-start-1 row-start-1 h-[13px] w-[13px]" fill="none" stroke="#222" strokeWidth="1.3">
          <path d="M2.5 6.5L5 9.2L10.5 3.6" />
        </svg>
      )}
    </span>
  );
};

// ---------- header ----------

const MENUS = ["File", "Edit", "View", "Curve", "Surface", "Solid", "Mesh", "Dimension", "Transform", "Tools", "Analyze", "Render", "Panels", "Help"];

const TitleBar = () => (
  <div className="flex h-[23px] items-center bg-white pr-[19px] pl-[2px] text-[#8f8f8f]">
    <RhinoLogo />
    <h1 className="flex-1 pl-[5px]">Daniela10TM.3dm (52 MB) - Rhinoceros 6 Commercial - [Top]</h1>
    <div className="flex gap-[33px]">
      <button aria-label="Minimize"><svg viewBox="0 0 12 12" className="h-3 w-3" stroke="#777"><path d="M1 6.5H11" /></svg></button>
      <button aria-label="Restore"><svg viewBox="0 0 12 12" className="h-3 w-3" stroke="#777" fill="none"><path d="M1.5 3.5H8.5V10.5H1.5ZM3.5 3.5V1.5H10.5V8.5H8.5" /></svg></button>
      <button aria-label="Close"><svg viewBox="0 0 12 12" className="h-3 w-3" stroke="#777"><path d="M1 1L11 11M11 1L1 11" /></svg></button>
    </div>
  </div>
);

const MenuBar = () => (
  <nav className="flex h-[19px] items-center gap-3 bg-white pl-[7px] text-[#6b6b6b]">
    {MENUS.map((menu) => (
      <button key={menu}>{menu}</button>
    ))}
  </nav>
);

const CommandArea = () => (
  <section className="flex h-14 border-b border-[#d3d7e3] pt-1 pb-1">
    <div className="mr-[2px] ml-[3px] w-[3px] border-x border-[#c9cfdf]" />
    <div className="flex flex-1 flex-col bg-white">
      <div className="h-7 border-b border-[#b9bfd0] leading-[14px]">
        <p>Command: _Rebuild</p>
        <p>Maximum deviation = 19.117</p>
      </div>
      <label className="flex flex-1 items-center font-bold">
        Command:
        <input type="text" className="h-4 flex-1 outline-none" />
      </label>
    </div>
    <div className="flex w-[17px] flex-col items-center justify-between pt-[6px]">
      <button aria-label="Scroll up" className="flex h-[6px]"><Chevron up /></button>
      <button aria-label="Scroll down" className="flex h-[6px]"><Chevron /></button>
      <Spinner label="history" className="h-[18px]" />
    </div>
  </section>
);

const TOOL_TABS = [
  ["Standard", "w-[69px]"],
  ["CPlanes", "w-[63px]"],
  ["Set View", "w-16"],
  ["Display", "w-[59px]"],
  ["Select", "w-[53px]"],
  ["Viewport Layout", "w-[106px]"],
  ["Visibility", "w-[65px]"],
  ["Transform", "w-[75px]"],
  ["Curve Tools", "w-[81px]"],
  ["Surface Tools", "w-[90px]"],
  ["Solid Tools", "w-[77px]"],
  ["Mesh Tools", "w-20"],
  ["Render Tools", "w-[89px]"],
  ["Drafting", "w-[63px]"],
  ["New in V6", "w-[74px]"],
];

const ToolTabs = () => {
  const [active, setActive] = useState("Standard");
  return (
    <div className="flex h-[21px] items-end border-b border-[#c5cbdc] pr-px pl-[3px]">
      <div className="mr-px h-4 w-[3px] border-x border-[#c9cfdf]" />
      {TOOL_TABS.map(([name, width]) => (
        <button
          key={name}
          onClick={() => setActive(name)}
          className={`h-[17px] shrink-0 rounded-tr bg-[#bcc5da] pt-px pr-px [clip-path:polygon(7px_0,100%_0,100%_100%,0_100%)] ${width}`}
        >
          <span
            className={`flex h-4 items-center justify-center rounded-tr whitespace-nowrap [clip-path:polygon(8px_0,100%_0,100%_100%,1px_100%)] ${active === name ? "bg-[#eaebef]" : "bg-[#d7d7d8]"}`}
          >
            {name}
          </span>
        </button>
      ))}
      <div className="flex-1" />
      <button aria-label="Toolbar options"><Gear /></button>
    </div>
  );
};

// ---------- viewport ----------

const ORIGINAL = [
  [455, 650], [377, 526], [483, 420], [601, 499], [717, 459], [827, 423],
  [958, 426], [1033, 529], [936, 634], [821, 660], [699, 657], [580, 618],
];

const REBUILT = [
  [442, 642], [386, 530], [460, 433], [563, 470], [658, 497], [765, 426],
  [886, 427], [1023, 454], [993, 590], [877, 659], [712, 662], [586, 618],
];

// the rebuilt curve is pulled outwards at the two tight corners
const REBUILT_FIT = REBUILT.map(([x, y], i) => {
  if (i === 0) return [x, y + 3];
  if (i === 7) return [x + 8, y - 2];
  return [x, y];
});

// closed uniform cubic B-spline converted to bezier segments
const splinePath = (pts) => {
  const n = pts.length;
  const at = (i) => pts[(i + n) % n];
  const mix = (a, b, t) => [a[0] + (b[0] - a[0]) * t, a[1] + (b[1] - a[1]) * t];
  let d = "";
  for (let i = 0; i < n; i++) {
    const c1 = mix(at(i), at(i + 1), 1 / 3);
    const c2 = mix(at(i), at(i + 1), 2 / 3);
    const start = mix(mix(at(i - 1), at(i), 2 / 3), c1, 0.5);
    const end = mix(c2, mix(at(i + 1), at(i + 2), 1 / 3), 0.5);
    if (i === 0) d += `M${start}`;
    d += `C${c1} ${c2} ${end}`;
  }
  return d + "Z";
};

const CurveDrawing = () => (
  <svg className="h-full w-full" aria-label="Top view">
    <g transform="translate(-65 -157)">
      {[ORIGINAL, REBUILT].map((pts, i) => (
        <polygon key={i} points={pts.join(" ")} fill="none" stroke="#000" strokeWidth="1.2" strokeDasharray="1.2 2.8" />
      ))}
      <path d={splinePath(REBUILT_FIT)} fill="none" stroke="#efe72c" strokeWidth="1.6" />
      <path d={splinePath(ORIGINAL)} fill="none" stroke="#15161a" strokeWidth="1.2" />
      {[...ORIGINAL, ...REBUILT].map(([x, y], i) => (
        <circle key={i} cx={x} cy={y} r="3" fill="#fff" stroke="#222" strokeWidth="1.2" />
      ))}
      <path d="M991 479L1000 473" stroke="#e02020" strokeWidth="2" />
      <circle cx="991" cy="479" r="3" fill="#fff" stroke="#e02020" strokeWidth="1.4" />
      <circle cx="1000" cy="473" r="3" fill="#fff" stroke="#e02020" strokeWidth="1.4" />
      <rect x="1282" y="560" width="84" height="33" fill="url(#gMesh)" />
      <path d="M101.5 946V976.5H131" fill="none" stroke="#5b5e64" />
      <g fontFamily="Open Sans, sans-serif" fontSize="14" fill="#5b5e64">
        <text x="104" y="946">y</text>
        <text x="133" y="977">x</text>
      </g>
    </g>
  </svg>
);

const Palette = () => (
  <div className="absolute top-[117px] left-[60px] flex h-[506px] w-[84px] flex-col border border-[#c9d0de] bg-[#eaebef] [clip-path:polygon(12px_0,100%_0,100%_100%,0_100%,0_12px)]">
    <div className="flex h-[21px] items-center text-[#444]">
      <span className="w-[25px] overflow-hidden pl-[13px]">Hu</span>
      <div className="flex h-5 flex-1 items-center justify-end gap-[6px] self-start bg-[#9ab2cf] pr-[6px]">
        <button aria-label="Palette options"><SolidGear color="#eeeeee" /></button>
        <button aria-label="Close palette">
          <svg viewBox="0 0 8 8" className="h-2 w-2" stroke="#f2f5fa" strokeWidth="2"><path d="M1 1L7 7M7 1L1 7" /></svg>
        </button>
      </div>
    </div>
    <div className="grid w-14 grid-cols-2">
      {PALETTE_TOOLS.map((tool) => (
        <ToolButton key={tool[0]} tool={tool} />
      ))}
    </div>
  </div>
);

const NumberField = ({ label, current, id, value }) => (
  <div className="flex h-6 items-center">
    <label htmlFor={id} className="w-[90px]">{label}</label>
    <span className="w-[45px] text-right">({current})</span>
    <div className="ml-[11px] flex h-6 w-[70px] border border-[#7a7a7a] bg-white">
      <input id={id} type="text" defaultValue={value} className="min-w-0 flex-1 pb-[2px] pl-[5px] outline-none" />
      <Spinner label={label} className="my-px mr-px" />
    </div>
  </div>
);

const RebuildDialog = () => (
  <div role="dialog" aria-label="Rebuild" className="absolute top-[135px] left-[1189px] w-[263px] border border-[#55585e] bg-[#f0f0f0] shadow-[0_4px_14px_rgba(0,0,0,0.4)]">
    <div className="flex h-[30px] items-center bg-white pr-[9px] pl-2">
      <RhinoLogo />
      <h2 className="flex-1 pl-[5px]">Rebuild</h2>
      <button aria-label="Close"><svg viewBox="0 0 12 12" className="h-3 w-3" stroke="#000"><path d="M1 1L11 11M11 1L1 11" /></svg></button>
    </div>
    <div className="flex flex-col pt-[13px] pr-[14px] pb-[10px] pl-3">
      <div className="flex flex-col gap-[2px]">
        <NumberField label="Point count:" current="12" id="pointCount" value="12" />
        <NumberField label="Degree:" current="3" id="degree" value="3" />
      </div>
      <div className="mt-[10px] flex flex-col">
        {["Delete input", "Create new object on current layer", "Preserve end tangent directions"].map((text) => (
          <label key={text} className="flex h-5 items-center gap-[3px]">
            <Checkbox defaultChecked />
            {text}
          </label>
        ))}
      </div>
      <button className="mt-[7px] ml-px h-6 border border-[#adadad] bg-[#e1e1e1]">Select Master Curve</button>
      <dl className="mt-[5px] grid grid-cols-[140px_1fr] leading-[20px]">
        <dt>Span count (12):</dt>
        <dd>12</dd>
        <dt>Maximum deviation:</dt>
        <dd>19.117</dd>
      </dl>
      <div className="mt-2 ml-px flex gap-[7px]">
        <button className="h-6 flex-1 border-2 border-[#0f6fc5] bg-[#e1e1e1]">OK</button>
        <button className="h-6 flex-1 border border-[#adadad] bg-[#e1e1e1]">Cancel</button>
        <button className="h-6 flex-1 border border-[#adadad] bg-[#e1e1e1]">Preview</button>
      </div>
    </div>
  </div>
);

const VIEW_TABS = [
  ["Perspective", "w-[75px]"],
  ["Top", "w-[34px]"],
  ["Front", "w-[43px]"],
  ["Right", "w-11"],
];

const ViewTab = ({ active, width, children, ...rest }) => (
  <button className={`h-5 rounded-br bg-[#bcc5da] pr-px pb-px [clip-path:polygon(0_0,100%_0,100%_100%,7px_100%)] ${width}`} {...rest}>
    <span className={`flex h-[19px] items-center justify-center rounded-br pt-px pl-[5px] [clip-path:polygon(1px_0,100%_0,100%_100%,8px_100%)] ${active ? "bg-[#eaebef]" : "bg-[#d7d7d8]"}`}>
      {children}
    </span>
  </button>
);

const Viewport = () => {
  const [view, setView] = useState("Top");
  return (
    <div className="flex min-w-0 flex-1 flex-col pt-[7px]">
      <div className="relative min-h-0 flex-1 overflow-hidden border border-[#c3c9d8] bg-[#9ca3ac]">
        <CurveDrawing />
        <button className="absolute top-0 left-0 flex h-[18px] items-center gap-[6px] bg-[#8ba5c2] pr-[3px] pl-[7px] text-[13px] font-bold">
          Top
          <span className="flex h-3 items-center border-l border-black pl-[3px]"><Arrow /></span>
        </button>
        <Palette />
        <RebuildDialog />
      </div>
      <div className="flex h-[27px] pt-px">
        {VIEW_TABS.map(([name, width]) => (
          <ViewTab key={name} width={width} active={view === name} onClick={() => setView(name)}>{name}</ViewTab>
        ))}
        <ViewTab width="w-6" active aria-label="Add viewport">
          <svg viewBox="0 0 10 10" className="h-[10px] w-[10px]" fill="#fff" stroke="#555">
            <path d="M3.5.5H6.5V3.5H9.5V6.5H6.5V9.5H3.5V6.5H.5V3.5H3.5Z" />
          </svg>
        </ViewTab>
      </div>
    </div>
  );
};

// ---------- properties panel ----------

const PANEL_TABS = [
  ["Properties", <Ring r={22} />],
  ["Layers", <Layers />],
  ["Render", (
    <g>
      <circle cx="38" cy="46" r="26" fill="url(#gBall)" />
      <path d="M40 24L56 8H76V20H62L50 28Z" fill="#fff" stroke="#222" strokeWidth="3" />
    </g>
  )],
  ["Materials", (
    <g stroke="#333" strokeWidth="3">
      <path d="M14 66L34 38L48 48L26 72Z" fill="#ddd" />
      <path d="M34 38L54 12L68 20L48 48Z" fill="#d9541e" />
    </g>
  )],
  ["Libraries", (
    <g stroke="#3a2c00" strokeWidth="4" strokeLinejoin="round">
      <path d="M10 64V20H30L36 28H64V38" fill="#ffe27a" />
      <path d="M10 64L24 38H76L62 64Z" fill="url(#gYellow)" />
    </g>
  )],
  ["Help", (
    <g>
      <rect x="8" y="10" width="68" height="64" fill="#e9eeff" stroke="#1f3c9a" strokeWidth="5" />
      <path d="M8 10H76V24H8Z" fill="#4d6fd0" />
      <circle cx="42" cy="50" r="20" fill="#3557c8" />
      <text x="42" y="63" textAnchor="middle" fontFamily="Liberation Serif, serif" fontWeight="bold" fontSize="36" fill="#fff">?</text>
    </g>
  )],
];

const PropertyRow = ({ label, disabled, children }) => (
  <div className="grid h-[21px] grid-cols-[17px_104px_1fr] pb-px">
    <span />
    <div className={`bg-white pl-[5px] leading-5 whitespace-nowrap ${disabled ? "text-[#808080]" : ""}`}>{label}</div>
    <div className={`ml-px flex min-w-0 items-center ${disabled ? "bg-[#eaebef]" : "bg-white"}`}>{children}</div>
  </div>
);

const Choice = ({ label, swatch, value }) => (
  <PropertyRow label={label}>
    {swatch}
    <select aria-label={label} className="h-5 min-w-0 flex-1 appearance-none pl-[3px] outline-none">
      <option>{value}</option>
    </select>
    <span className="flex h-5 w-5 items-center justify-center border-t border-l border-[#adadad] bg-[#e3e3e3]"><Chevron /></span>
  </PropertyRow>
);

const PanelHeading = ({ children }) => <h3 className="h-[26px] pl-[3px] text-[14px] leading-[26px]">{children}</h3>;

const PropertiesPanel = () => (
  <aside className="flex w-[261px] shrink-0 flex-col pt-[10px] pr-px pb-[9px] pl-2">
    <div className="h-[3px] border-y border-[#c9cfdf]" />
    <div className="mt-[2px] flex h-[21px] items-end">
      {PANEL_TABS.map(([name, icon], i) => (
        <button
          key={name}
          aria-label={name}
          className={`h-5 w-[38px] rounded-tl bg-[#bcc5da] pt-px pl-px [clip-path:polygon(0_0,27px_0,100%_100%,0_100%)] ${i === 0 ? "" : "border-b border-[#bcc5da]"}`}
        >
          <span className={`flex h-full items-center rounded-tl pl-[3px] [clip-path:polygon(0_0,26px_0,36px_100%,0_100%)] ${i === 0 ? "bg-[#f5f6f9]" : "bg-[#d7d7d8]"}`}>
            <svg viewBox="0 0 84 84" className="h-[18px] w-[18px]">{icon}</svg>
          </span>
        </button>
      ))}
      <span className="flex flex-1 justify-end pb-px"><button aria-label="Panel options"><SolidGear /></button></span>
    </div>
    <div className="flex flex-1 flex-col border border-[#c3c9d8] bg-[#f5f6f9] px-[3px] pb-[3px]">
      <div className="flex gap-1 pt-[3px] pb-1">
        <button aria-label="Object" className="flex h-[26px] w-[26px] items-center justify-center border border-[#26619c] bg-[#b5d2ec]">
          <svg viewBox="0 0 84 84" className="h-6 w-6"><Ring r={28} /></svg>
        </button>
        <button aria-label="Curve piping" className="flex h-[26px] w-[26px] items-center justify-center border border-[#adadad] bg-[#e1e1e1]">
          <svg viewBox="0 0 84 84" className="h-6 w-6" fill="none">
            <path d="M46 14Q20 18 22 44Q28 68 72 62" stroke="#444" strokeWidth="24" />
            <path d="M46 14Q20 18 22 44Q28 68 71 62" stroke="#d4d4d4" strokeWidth="18" />
            <path d="M46 14Q20 18 22 44Q28 68 72 62" stroke="#444" strokeWidth="3" strokeDasharray="7 4" />
          </svg>
        </button>
        <button aria-label="Attribute text" className="flex h-[26px] w-[26px] items-center justify-center border border-[#adadad] bg-[#e1e1e1]">
          <svg viewBox="0 0 84 84" className="h-6 w-6" stroke="#111" strokeWidth="3">
            <path d="M26 26V70Q52 88 78 70V26Z" fill="url(#gDeep)" />
            <ellipse cx="52" cy="26" rx="26" ry="11" fill="#a9bbff" />
            <path d="M2 6H44M2 14H44M2 22H40M2 30H36" strokeDasharray="10 2" />
          </svg>
        </button>
      </div>
      <div className="flex flex-1 flex-col bg-[#f0f0f0] pt-1 pr-[5px]">
        <div className="pb-[2px]"><PanelHeading>Object</PanelHeading></div>
        <PropertyRow label="Type"><span className="pl-1">closed curve</span></PropertyRow>
        <PropertyRow label="Name"><input aria-label="Name" type="text" className="h-5 min-w-0 flex-1 px-1 outline-none" /></PropertyRow>
        <Choice label="Layer" value="Default" swatch={<span className="ml-1 h-[15px] w-[15px] bg-black" />} />
        <Choice label="Display Color" value="By Layer" swatch={<span className="ml-1 h-[15px] w-[15px] border border-black bg-white" />} />
        <Choice label="Linetype" value="By Layer" />
        <Choice
          label="Print Color"
          value="By Layer"
          swatch={<svg viewBox="0 0 15 15" className="ml-1 h-[15px] w-[15px]" fill="#fff" stroke="#000"><path d="M7.5 1.5L13.5 7.5L7.5 13.5L1.5 7.5Z" /></svg>}
        />
        <Choice label="Print Width" value="By Layer" />
        <PropertyRow label="Hyperlink">
          <input aria-label="Hyperlink" type="text" className="h-5 min-w-0 flex-1 px-1 outline-none" />
          <button className="h-[19px] w-[19px] border border-[#adadad] bg-[#e1e1e1] leading-[14px]">...</button>
        </PropertyRow>
        <PanelHeading>Render Mesh Settings</PanelHeading>
        <PropertyRow label="Custom Mesh" disabled><span className="pl-px"><Checkbox disabled aria-label="Custom Mesh" /></span></PropertyRow>
        <PropertyRow label="Settings" disabled>
          <button disabled className="ml-px h-[19px] flex-1 border border-[#bfbfbf] bg-[#cccccc] leading-[16px] text-[#808080]">Adjust...</button>
        </PropertyRow>
        <PanelHeading>Rendering</PanelHeading>
        <PropertyRow label="Casts shadows"><span className="pl-px"><Checkbox defaultChecked aria-label="Casts shadows" /></span></PropertyRow>
        <PropertyRow label="Receives shadows"><span className="pl-px"><Checkbox defaultChecked aria-label="Receives shadows" /></span></PropertyRow>
        <PanelHeading>Isocurve Density</PanelHeading>
        <PropertyRow label="Density" disabled>
          <input aria-label="Density" type="text" disabled className="h-5 min-w-0 flex-1" />
          <Spinner label="density" className="mr-[2px] h-[18px] text-[#666] opacity-70" />
        </PropertyRow>
        <PropertyRow label="Show surface is..." disabled><span className="pl-px"><Checkbox disabled aria-label="Show surface isocurves" /></span></PropertyRow>
        <button className="mt-[5px] h-6 border border-[#adadad] bg-[#e1e1e1]">Match</button>
        <button className="mt-1 h-6 border border-[#adadad] bg-[#e1e1e1]">Details...</button>
      </div>
    </div>
  </aside>
);

// ---------- footer ----------

const OSNAPS = [
  ["End", "w-[43px]", true],
  ["Near", "w-12", true],
  ["Point", "w-[51px]", true],
  ["Mid", "w-11", true],
  ["Cen", "w-11", true],
  ["Int", "w-[37px]", true],
  ["Perp", "w-[47px]", true],
  ["Tan", "w-[42px]", true],
  ["Quad", "w-[52px]", true],
  ["Knot", "w-12", true],
  ["Vertex", "w-[57px]", true],
  ["Project", "w-[68px]", false],
  ["Disable", "w-[68px]", false],
];

const STATUS = [
  ["CPlane", "w-[50px]"],
  ["x -111.053", "w-[88px]"],
  ["y 76.499", "w-[89px]"],
  ["z 0.000", "w-[87px]"],
  ["Millimeters", "w-[88px]"],
  ["Default", "w-[168px]", "layer"],
  ["Grid Snap", "w-[65px]"],
  ["Ortho", "w-[46px]"],
  ["Planar", "w-[47px]", "on"],
  ["Osnap", "w-12", "on"],
  ["SmartTrack", "w-[73px]"],
  ["Gumball", "w-[59px]", "on"],
  ["Record History", "w-[91px]"],
  ["Filter", "w-10"],
];

const OsnapBar = () => (
  <div className="flex h-5 items-center pl-[3px]">
    <div className="mr-[3px] h-[18px] w-[3px] border-x border-[#c9cfdf]" />
    {OSNAPS.map(([name, width, on]) => (
      <label key={name} className={`flex shrink-0 items-center gap-[3px] whitespace-nowrap ${width}`}>
        {on ? <Checkbox defaultChecked /> : <input type="checkbox" className="mr-[2px] h-[11px] w-[11px] appearance-none border border-[#b5b5b5] bg-[#dddddd]" />}
        {name}
      </label>
    ))}
  </div>
);

const StatusBar = () => (
  <footer className="flex h-5 border-t border-b-2 border-t-[#b9c2d6] border-b-[#3d3d42]">
    {STATUS.map(([text, width, kind]) => (
      <button
        key={text}
        className={`flex h-full shrink-0 items-center border-r border-[#bcc5da] pt-[3px] leading-[14px] whitespace-nowrap ${width} ${
          kind === "layer" ? "gap-[3px] pl-[3px]" : "justify-center"
        } ${kind === "on" ? "bg-[#dff0fc] font-bold" : ""}`}
      >
        {kind === "layer" && <span className="h-[14px] w-[14px] bg-black" />}
        {text}
      </button>
    ))}
    <span className="pt-[3px] pl-px leading-[14px]">Minutes from last save: 1</span>
  </footer>
);

const App = () => {
  return (
    <div className="flex h-screen flex-col overflow-hidden bg-[#eaebef] font-['Open_Sans',sans-serif] text-[12px] leading-4 text-[#111]">
      <Gradients />
      <TitleBar />
      <MenuBar />
      <CommandArea />
      <ToolTabs />
      <div className="flex h-[30px] items-start pl-[6px]">
        {STANDARD_TOOLS.map((tool) => (
          <ToolButton key={tool[0]} tool={tool} />
        ))}
      </div>
      <main className="flex min-h-0 flex-1">
        <div className="w-16 shrink-0 pt-[10px]">
          <div className="mb-px ml-[3px] h-[3px] w-[55px] border-y border-[#c9cfdf]" />
          <div className="grid w-14 grid-cols-2">
            {SIDE_TOOLS.map((tool) => (
              <ToolButton key={tool[0]} tool={tool} />
            ))}
          </div>
        </div>
        <Viewport />
        <PropertiesPanel />
      </main>
      <OsnapBar />
      <StatusBar />
    </div>
  );
};

export default App;
